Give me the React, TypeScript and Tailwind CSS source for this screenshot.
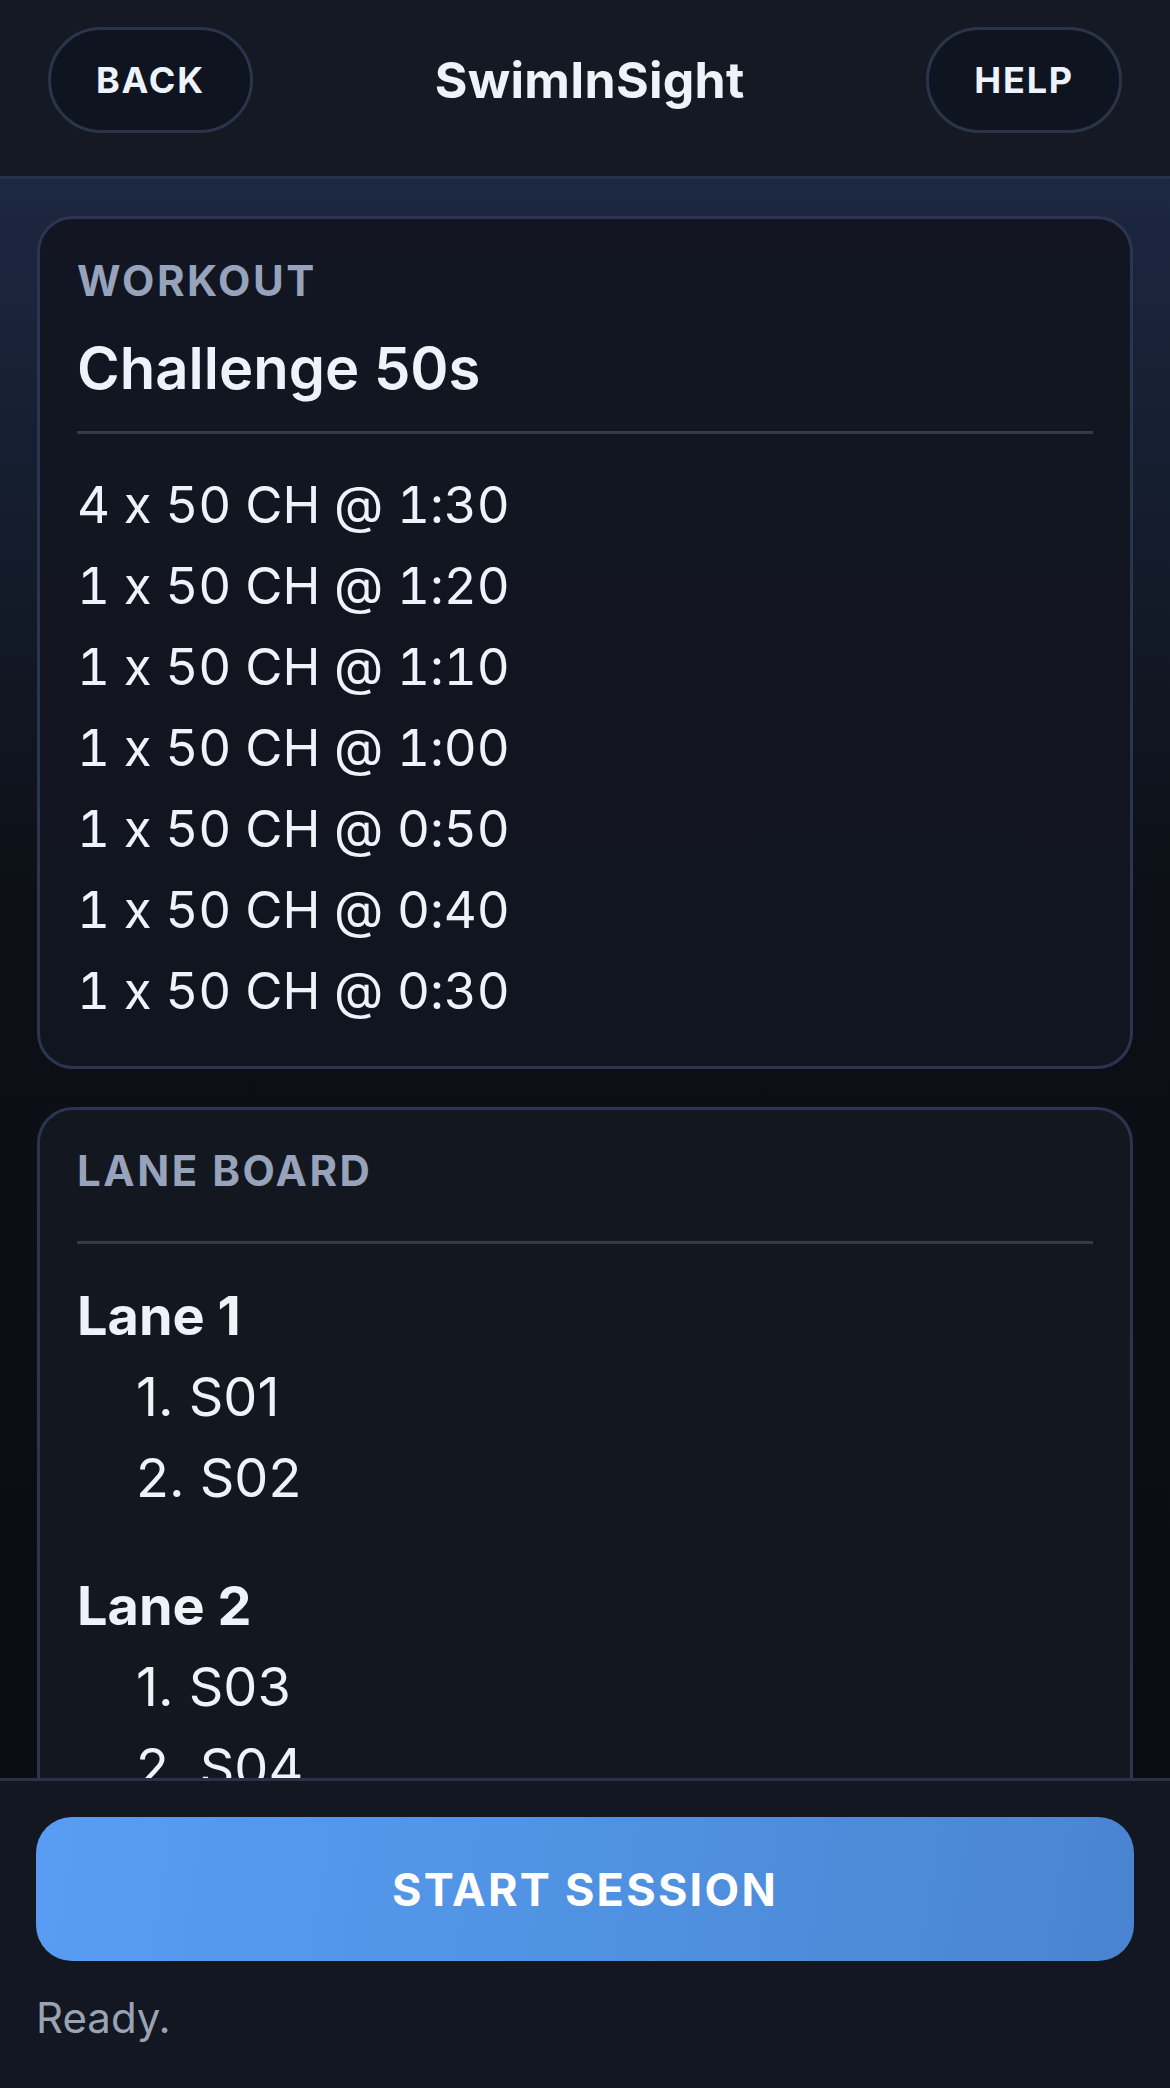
const workout = [
  "4 x 50 CH @ 1:30",
  "1 x 50 CH @ 1:20",
  "1 x 50 CH @ 1:10",
  "1 x 50 CH @ 1:00",
  "1 x 50 CH @ 0:50",
  "1 x 50 CH @ 0:40",
  "1 x 50 CH @ 0:30",
];

const lanes = [
  { name: "Lane 1", swimmers: ["S01", "S02"] },
  { name: "Lane 2", swimmers: ["S03", "S04"] },
];

function PillButton({ label }: { label: string }) {
  return (
    <button className="h-[106px] px-[45px] rounded-full border-[3px] border-[#2b3449] bg-[#0f1421] text-[#eef2fa] text-[36px] leading-none font-bold tracking-[0.05em]">
      {label}
    </button>
  );
}

export default function App() {
  return (
    <div
      className="h-[2088px] w-full flex flex-col bg-[#0b0e13] text-[#eef2f9] overflow-hidden [font-feature-settings:'calt'_0]"
      style={{ fontFamily: "Inter, 'Noto Sans', sans-serif" }}
    >
      {/* HEADER */}
      <header className="shrink-0 h-[179px] bg-[#151923] border-b-[3px] border-[#29324a] px-[48px] pt-[27px] flex items-start justify-between">
        <PillButton label="BACK" />
        <h1 className="h-[106px] flex items-center text-[50px] font-bold leading-none tracking-[0.005em]">
          SwimInSight
        </h1>
        <PillButton label="HELP" />
      </header>

      {/* CONTENT */}
      <main className="flex-1 min-h-0 overflow-hidden px-[37px] pt-[37px] flex flex-col gap-[38px] bg-[linear-gradient(180deg,#1c2741_0%,#141c2c_22%,#0c1016_45%,#0a0c11_100%)]">
        <section className="shrink-0 rounded-[36px] border-[3px] border-[#2b3550] bg-[rgba(18,22,32,0.93)] px-[37px] pt-[37px] pb-[35px]">
          <div className="text-[42px] leading-[50px] font-bold tracking-[0.06em] text-[#97a3ba]">
            WORKOUT
          </div>
          <h2 className="mt-[26px] text-[58px] leading-[72px] font-semibold">Challenge 50s</h2>
          <div className="mt-[27px] h-[3px] bg-[#333a48]" />
          <div className="mt-[30px] flex flex-col">
            {workout.map((line) => (
              <div key={line} className="text-[51px] leading-[81px] tabular-nums">
                {line}
              </div>
            ))}
          </div>
        </section>

        <section className="shrink-0 rounded-[36px] border-[3px] border-[#2b3550] bg-[#121720] px-[37px] pt-[36px] pb-[37px]">
          <div className="text-[42px] leading-[50px] font-bold tracking-[0.06em] text-[#97a3ba]">
            LANE BOARD
          </div>
          <div className="mt-[45px] h-[3px] bg-[#333a48]" />
          <div className="mt-[31px] flex flex-col gap-[47px]">
            {lanes.map((lane) => (
              <div key={lane.name}>
                <div className="text-[54px] leading-[81px] font-bold">{lane.name}</div>
                <ol className="pl-[59px]">
                  {lane.swimmers.map((s, i) => (
                    <li key={s} className="text-[54px] leading-[81px]">
                      {i + 1}. {s}
                    </li>
                  ))}
                </ol>
              </div>
            ))}
          </div>
        </section>
      </main>

      {/* FOOTER */}
      <footer className="shrink-0 h-[310px] bg-[#121722] border-t-[3px] border-[#29324a] px-[36px] pt-[36px]">
        <button className="w-full h-[144px] rounded-[36px] bg-[linear-gradient(100deg,#589df3_0%,#5092e2_50%,#4a84d0_100%)] text-white text-[45px] font-bold tracking-[0.05em] leading-none">
          START SESSION
        </button>
        <p className="mt-[27px] text-[42px] leading-[60px] text-[#9aa3b4]">Ready.</p>
      </footer>
    </div>
  );
}
